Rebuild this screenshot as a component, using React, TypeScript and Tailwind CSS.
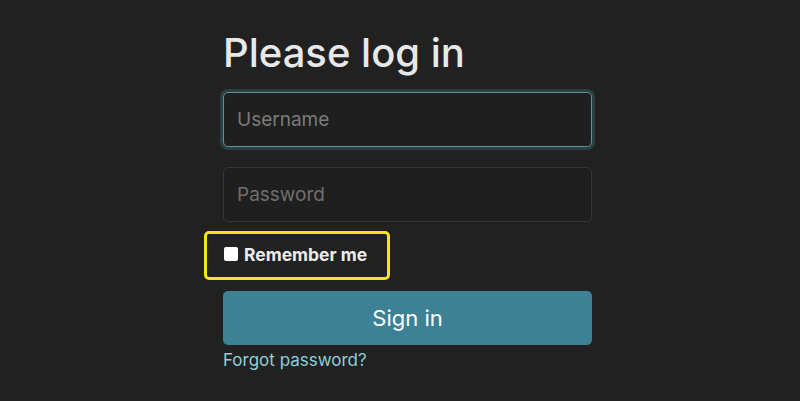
import { useState } from "react";

export default function App() {
  const [remember, setRemember] = useState(false);

  return (
    <div className="min-h-[401px] w-full bg-[#212121] font-['Inter',sans-serif]">
      <form
        className="flex w-[369px] flex-col pl-0 pt-[29px] ml-[223px]"
        onSubmit={(e) => e.preventDefault()}
      >
        <h1 className="text-[40px] font-medium leading-[48px] text-[#e8e8e8]">
          Please log in
        </h1>

        <input
          type="text"
          placeholder="Username"
          className="mt-[15px] h-[55px] w-full rounded-[5px] border border-[#5f9196] bg-[#1f1f1f] px-[13px] text-[19px] text-[#e0e0e0] caret-white placeholder:text-[#7b7b7b] outline-none shadow-[0_0_0_3px_rgba(66,120,126,0.35)]"
        />
        <input
          type="password"
          placeholder="Password"
          className="mt-[20px] h-[55px] w-full rounded-[5px] border border-[#363636] bg-[#1f1f1f] px-[13px] text-[19px] text-[#e0e0e0] placeholder:text-[#6f6f6f] outline-none"
        />

        {/* highlighted checkbox row */}
        <div className="-ml-[19px] mt-[9px] flex h-[49px] w-[186px] items-center rounded-[5px] border-[3px] border-[#f2e61a] pl-[17px]">
          <label className="flex items-center gap-[6px] text-[17.5px] font-bold text-[#ececec]">
            <input
              type="checkbox"
              checked={remember}
              onChange={(e) => setRemember(e.target.checked)}
              className="-mt-[3px] h-[14px] w-[14px] appearance-none rounded-[2px] bg-white"
            />
            Remember me
          </label>
        </div>

        <button
          type="submit"
          className="mt-[11px] h-[54px] w-full rounded-[5px] bg-[#3c8194] text-[22px] text-white"
        >
          Sign in
        </button>
        <a href="#" className="mt-[3px] text-[17px] leading-[24px] text-[#8fd0d8]">
          Forgot password?
        </a>
      </form>
    </div>
  );
}
